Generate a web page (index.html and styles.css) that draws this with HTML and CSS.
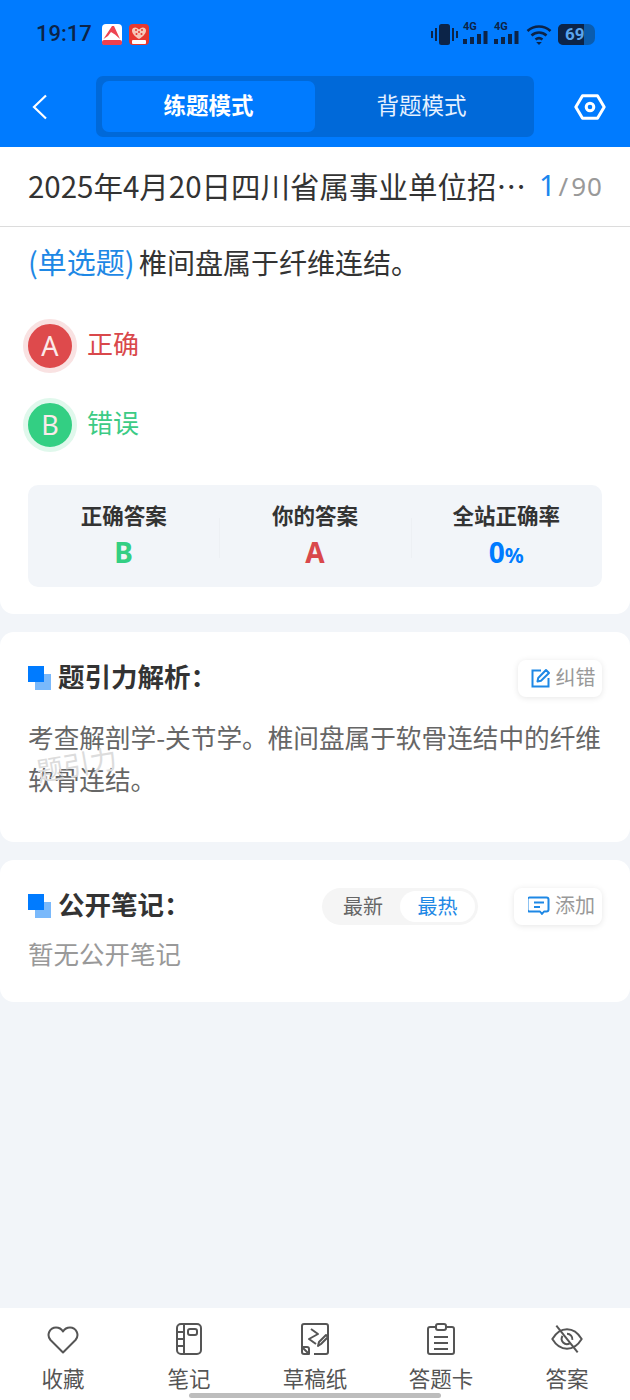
FILE: index.html
```html
<!DOCTYPE html>
<html lang="zh">
<head>
<meta charset="utf-8">
<title>练题模式</title>
<link rel="stylesheet" href="styles.css">
</head>
<body>
<div class="app">
  <header class="header">
    <div class="status">
      <div class="status-left">
        <span class="time">19:17</span>
        <svg class="app-icon" viewBox="0 0 20 21"><rect width="20" height="21" rx="4" fill="#fff"/><path d="M1.500 15 10 2h2l6 13-5-4.500L9 8l-3 4z" fill="#ee4452"/><rect y="16" width="20" height="5" rx="2" fill="#ee3f4d"/></svg>
        <svg class="app-icon" viewBox="0 0 20 21"><rect width="20" height="21" rx="4" fill="#e8392f"/><path d="M10 15C5 12 3 9 3 6.500 3 4 6 2.500 8 4l2 1.500L12 4c2-1.500 5 0 5 2.500C17 9 15 12 10 15z" fill="#f6c9b8"/><g fill="#e8392f"><circle cx="7" cy="6" r="1"/><circle cx="10" cy="8" r="1"/><circle cx="13" cy="6" r="1"/><circle cx="7.500" cy="10" r="1"/><circle cx="12.500" cy="10" r="1"/></g><rect x="3" y="16" width="14" height="4" rx="1" fill="#fff"/></svg>
      </div>
      <div class="status-right">
        <svg class="st-vib" viewBox="0 0 27 21"><rect x="8" y="0" width="11" height="21" rx="2.500" fill="#0c2448"/><rect x="0" y="7" width="2" height="7" fill="#0c2448"/><rect x="4" y="4" width="2" height="13" fill="#0c2448"/><rect x="21" y="4" width="2" height="13" fill="#0c2448"/><rect x="25" y="7" width="2" height="7" fill="#0c2448"/></svg>
        <span class="sig"><b>4G</b><svg viewBox="0 0 25 22"><rect x="0" y="16" width="4" height="5" fill="#0c2448"/><rect x="7" y="14" width="4" height="7" fill="#0c2448"/><rect x="14" y="11" width="4" height="10" fill="#0c2448"/><rect x="20.500" y="8" width="4" height="13" fill="#0c2448"/></svg></span>
        <span class="sig"><b>4G</b><svg viewBox="0 0 25 22"><rect x="0" y="16" width="4" height="5" fill="#0c2448"/><rect x="7" y="14" width="4" height="7" fill="#0c2448"/><rect x="14" y="11" width="4" height="10" fill="#0c2448"/><rect x="20.500" y="8" width="4" height="13" fill="#0c2448"/></svg></span>
        <svg class="st-wifi" viewBox="0 0 26 21" fill="none" stroke="#0c2448" stroke-width="2.600"><path d="M1.500 7C8 1 18 1 24.500 7"/><path d="M5.500 11.500C10 7.500 16 7.500 20.500 11.500"/><path d="M9.500 15.500c2-1.500 5-1.500 7 0"/><path d="M13 21l-2.800-3h5.600z" fill="#0c2448" stroke="none"/></svg>
        <span class="battery"><span class="batt-level">69</span><span class="batt-rest"></span></span>
      </div>
    </div>
    <nav class="nav">
      <svg class="back" viewBox="0 0 16 26" fill="none" stroke="#fff" stroke-width="2.200"><path d="M14 1.500 2 13l12 11.500"/></svg>
      <div class="mode-switch">
        <div class="mode mode-active">练题模式</div>
        <div class="mode">背题模式</div>
      </div>
      <svg class="settings" viewBox="0 0 32 26" fill="none" stroke="#fff" stroke-width="3" stroke-linejoin="round"><path d="M1.800 13 8.500 1.800h15L30.200 13l-6.700 11.200h-15z"/><circle cx="16" cy="13" r="3.800"/></svg>
    </nav>
  </header>

  <div class="titlebar">
    <div class="paper-title">2025年4月20日四川省属事业单位招…</div>
    <div class="counter"><span class="counter-now">1</span><span class="counter-sep">/</span>90</div>
  </div>

  <main class="content">
    <section class="card question-card">
      <p class="question"><span class="q-type">(单选题)</span> 椎间盘属于纤维连结。</p>
      <div class="option option-wrong">
        <span class="badge">A</span><span class="option-text">正确</span>
      </div>
      <div class="option option-right">
        <span class="badge">B</span><span class="option-text">错误</span>
      </div>
      <div class="stats">
        <div class="stat"><div class="stat-label">正确答案</div><div class="stat-value green">B</div></div>
        <div class="stat"><div class="stat-label">你的答案</div><div class="stat-value red">A</div></div>
        <div class="stat"><div class="stat-label">全站正确率</div><div class="stat-value blue">0<small>%</small></div></div>
      </div>
    </section>

    <section class="card analysis-card">
      <div class="card-head">
        <span class="mark"></span>
        <h2 class="card-title">题引力解析：</h2>
        <button class="chip">
          <svg class="chip-icon" viewBox="0 0 20 20" fill="none" stroke="#1e88e5" stroke-width="2"><path d="M10 2.500H1.500v16h16V10"/><path d="M6.500 13.500l.7-3.500L15 2l3 3-8 7.700z" stroke-linejoin="round"/></svg><span class="chip-text">纠错</span>
        </button>
      </div>
      <p class="analysis">考查解剖学-关节学。椎间盘属于软骨连结中的纤维软骨连结。</p>
      <span class="watermark">题引力</span>
    </section>

    <section class="card notes-card">
      <div class="card-head">
        <span class="mark"></span>
        <h2 class="card-title">公开笔记：</h2>
        <div class="sort">
          <span class="sort-item">最新</span>
          <span class="sort-item sort-active">最热</span>
        </div>
        <button class="chip chip-add">
          <svg class="chip-icon add-icon" viewBox="0 0 22 20" fill="none" stroke="#1e88e5" stroke-width="2" stroke-linejoin="round"><path d="M3.500 1.500h15a2 2 0 0 1 2 2v10a2 2 0 0 1-2 2h-2.500l-2 2.500-2-2.500h-10.500a2 2 0 0 1-2-2v-10a2 2 0 0 1 2-2z"/><path d="M6 6.500h10M6 11h6"/></svg><span class="chip-text">添加</span>
        </button>
      </div>
      <p class="empty">暂无公开笔记</p>
    </section>
  </main>

  <footer class="tabbar">
    <div class="tab">
      <svg class="tab-icon" viewBox="0 -2 32 32" fill="none" stroke="#555" stroke-width="2" stroke-linejoin="round"><path d="M16 27.500 3.500 15C-1 9.500 3 2.500 9 2.500c3 0 5.500 1.500 7 4 1.500-2.500 4-4 7-4 6 0 10 7 5.500 12.500z"/></svg>
      <span>收藏</span>
    </div>
    <div class="tab">
      <svg class="tab-icon" viewBox="0 0 32 32" fill="none" stroke="#555" stroke-width="2"><rect x="4" y="1" width="24" height="30" rx="4"/><path d="M11 1v30M4 9h7M4 16h7M4 23h7"/><rect x="15" y="6" width="9" height="6" rx="2"/></svg>
      <span>笔记</span>
    </div>
    <div class="tab">
      <svg class="tab-icon" viewBox="0 0 32 32" fill="none" stroke="#555" stroke-width="2" stroke-linejoin="round"><path d="M10 31H5a2 2 0 0 1-2-2V3a2 2 0 0 1 2-2h22a2 2 0 0 1 2 2v26a2 2 0 0 1-2 2H15"/><path d="M3 24h5a2 2 0 0 1 2 2v5z"/><path d="M12 6l7 5-9 5 7 5"/><path d="M19 23l1-4 7-7 2 2-7 7z" fill="#fff"/></svg>
      <span>草稿纸</span>
    </div>
    <div class="tab">
      <svg class="tab-icon" viewBox="0 0 32 32" fill="none" stroke="#555" stroke-width="2"><path d="M10 4H5a2 2 0 0 0-2 2v23a2 2 0 0 0 2 2h22a2 2 0 0 0 2-2V6a2 2 0 0 0-2-2h-5"/><rect x="11" y="1" width="10" height="6" rx="2"/><path d="M9 14h14M9 20h14M9 26h14"/></svg>
      <span>答题卡</span>
    </div>
    <div class="tab">
      <svg class="tab-icon" viewBox="0 0 36 32" fill="none" stroke="#555" stroke-width="2.200"><path d="M1.500 16C6 8.500 12 5 18 5s12 3.500 16.500 11C30 23.500 24 27 18 27S6 23.500 1.500 16z"/><path d="M13 12.500a6 6 0 0 0 8 8.500M24 17a6 6 0 0 0-6-7"/><path d="M6 1l24 30"/></svg>
      <span>答案</span>
    </div>
    <span class="home-bar"></span>
  </footer>
</div>
</body>
</html>
```
FILE: styles.css
```css
* { box-sizing: border-box; margin: 0; padding: 0; }
html, body { width: 630px; height: 1400px; overflow: hidden; }
body { font-family: "Noto Sans CJK SC", "Noto Sans", sans-serif; background: #f2f5f9; color: #333; }
.app { width: 630px; height: 1400px; display: flex; flex-direction: column; }

.header { height: 147px; background: #007bff; flex: none; display: flex; flex-direction: column; }
.status { height: 76px; padding: 22px 35px 0 36px; display: flex; justify-content: space-between; align-items: flex-start; flex: none; }
.status-left { display: flex; align-items: center; gap: 7px; height: 24px; }
.time { font-family: Roboto, sans-serif; font-weight: 500; font-size: 22px; line-height: 24px; color: #0c2448; margin-right: 3px; }
.app-icon { width: 20px; height: 21px; }
.status-right { display: flex; align-items: center; height: 24px; }
.st-vib { width: 27px; height: 21px; margin-right: 5px; }
.sig { position: relative; width: 25px; height: 22px; margin-right: 6px; display: block; }
.sig svg { width: 25px; height: 22px; display: block; }
.sig b { position: absolute; left: 0; top: -1px; font-family: Roboto, sans-serif; font-size: 11px; line-height: 10px; color: #0c2448; font-weight: 700; }
.st-wifi { width: 26px; height: 21px; margin: 0 6px 0 1px; }
.battery { width: 37px; height: 21px; display: flex; border-radius: 5px 7px 7px 5px; overflow: hidden; background: #0a5cae; }
.batt-level { width: 26px; background: #0c2448; color: #5ba6ee; font-family: Roboto, sans-serif; font-weight: 700; font-size: 17px; line-height: 21px; padding-left: 7px; white-space: nowrap; }
.batt-rest { flex: 1; }

.nav { flex: 1; display: flex; align-items: flex-start; padding-left: 32px; }
.back { width: 16px; height: 26px; margin-top: 18px; flex: none; }
.mode-switch { width: 438px; height: 61px; margin: 0 0 0 48px; background: #0069d9; border-radius: 7px; padding: 5px 6px; display: flex; flex: none; }
.mode { flex: 1; font-size: 22.500px; line-height: 47px; padding-bottom: 4px; text-align: center; color: #e6f1ff; border-radius: 7px; }
.mode-active { background: #007bff; color: #fff; font-weight: 700; flex: none; width: 213px; }
.settings { width: 32px; height: 26px; margin: 18px 0 0 40px; flex: none; }

.titlebar { height: 80px; background: #fff; border-bottom: 1px solid #dcdcdc; padding: 0 27px 4px 28px; display: flex; align-items: center; flex: none; }
.paper-title { font-size: 29.500px; line-height: 44px; color: #333; white-space: nowrap; flex: none; }
.counter { margin-left: auto; font-size: 26px; color: #999; font-family: "Noto Sans", sans-serif; letter-spacing: 1px; white-space: nowrap; }
.counter-now { color: #1a86ee; font-size: 29px; }
.counter-sep { margin: 0 2px; }

.content { flex: 1; display: flex; flex-direction: column; gap: 18px; min-height: 0; }
.card { background: #fff; border-radius: 14px; position: relative; flex: none; }
.question-card { height: 387px; border-radius: 0 0 14px 14px; padding: 0 28px; }
.question { font-size: 28px; line-height: 40px; padding-top: 14px; color: #333; word-spacing: -2px; }
.q-type { color: #1e88e5; font-size: 29px; }
.option { display: flex; align-items: center; height: 54px; margin-left: -5px; }
.question + .option { margin-top: 37px; }
.option + .option { margin-top: 25px; }
.badge { width: 54px; height: 54px; border-radius: 50%; text-align: center; font-size: 27px; line-height: 44px; color: #fbeaea; flex: none; font-family: "Noto Sans", sans-serif; }
.option-wrong .badge { background: #de4a4c; border: 5px solid #f9e2e2; }
.option-right .badge { background: #33cf83; border: 5px solid #e0f8ec; }
.option-text { font-size: 26px; line-height: 38px; margin-left: 10px; padding-bottom: 6px; }
.option-wrong .option-text { color: #d9484b; }
.option-right .option-text { color: #3ccb85; }

.stats { margin-top: 33px; height: 102px; background: #f2f5f9; border-radius: 10px; display: grid; grid-template-columns: repeat(3, 1fr); padding: 14px 0 0; }
.stat { text-align: center; position: relative; }
.stat + .stat::before { content: ""; position: absolute; left: 0; top: 19px; height: 40px; border-left: 1px solid #edf0f4; }
.stat-label { font-size: 21.500px; line-height: 32px; font-weight: 700; color: #333; }
.stat-value { font-size: 28px; line-height: 38px; margin-top: 2px; font-weight: 700; font-family: "Noto Sans", sans-serif; }
.stat-value small { font-size: 21px; }
.green { color: #33cf83; }
.red { color: #d9484b; }
.blue { color: #007bff; }

.analysis-card { height: 210px; padding: 28px 28px 0; }
.notes-card { height: 142px; padding: 28px 28px 0; }
.card-head { display: flex; align-items: center; height: 36px; }
.mark { width: 23px; height: 24px; flex: none; margin-right: 7px; background: linear-gradient(#007bff, #007bff) 0 0 / 16px 16px no-repeat, linear-gradient(#7ab9fb, #7ab9fb) 100% 100% / 16px 16px no-repeat; }
.card-title { font-size: 26.500px; font-weight: 700; line-height: 32px; padding-bottom: 4px; color: #333; white-space: nowrap; }
.chip { margin-left: auto; width: 84px; height: 37px; border: 0; background: #fff; border-radius: 8px; box-shadow: 0 1px 6px rgba(0, 0, 0, .1); font: inherit; font-size: 20px; color: #999; display: flex; align-items: center; justify-content: center; gap: 5px; padding-left: 6px; font-family: "Noto Sans CJK SC", sans-serif; flex: none; }
.chip-text { line-height: 28px; padding-bottom: 2px; }
.chip-icon { width: 20px; height: 20px; flex: none; }
.add-icon { width: 22px; }
.chip-add { margin-left: 36px; width: 88px; padding-left: 7px; }
.analysis { margin-top: 20px; font-size: 25.650px; line-height: 42px; color: #666; }
.watermark { position: absolute; left: 36px; top: 116px; font-size: 27px; line-height: 32px; color: #dcdcdc; transform: rotate(-10deg); pointer-events: none; }
.sort { margin-left: auto; width: 156px; height: 37px; background: #f5f5f5; border-radius: 19px; display: flex; padding: 3px 3px 3px 4px; }
.sort-item { flex: 1; font-size: 20px; line-height: 29px; padding-bottom: 2px; text-align: center; color: #666; border-radius: 16px; }
.sort-active { background: #fff; color: #1e88e5; flex: none; width: 75px; }
.sort + .chip { margin-left: 36px; }
.empty { margin-top: 13px; font-size: 25.500px; line-height: 32px; color: #999; }

.tabbar { height: 92px; background: #fff; flex: none; display: grid; grid-template-columns: repeat(5, 1fr); position: relative; padding: 15px 0 0; }
.tab { display: flex; flex-direction: column; align-items: center; font-size: 21.500px; line-height: 30px; color: #555; }
.tab-icon { width: 32px; height: 32px; margin-bottom: 8px; }
.home-bar { position: absolute; left: 189px; bottom: 2px; width: 252px; height: 5px; border-radius: 3px; background: #bdbdbd; }
```
